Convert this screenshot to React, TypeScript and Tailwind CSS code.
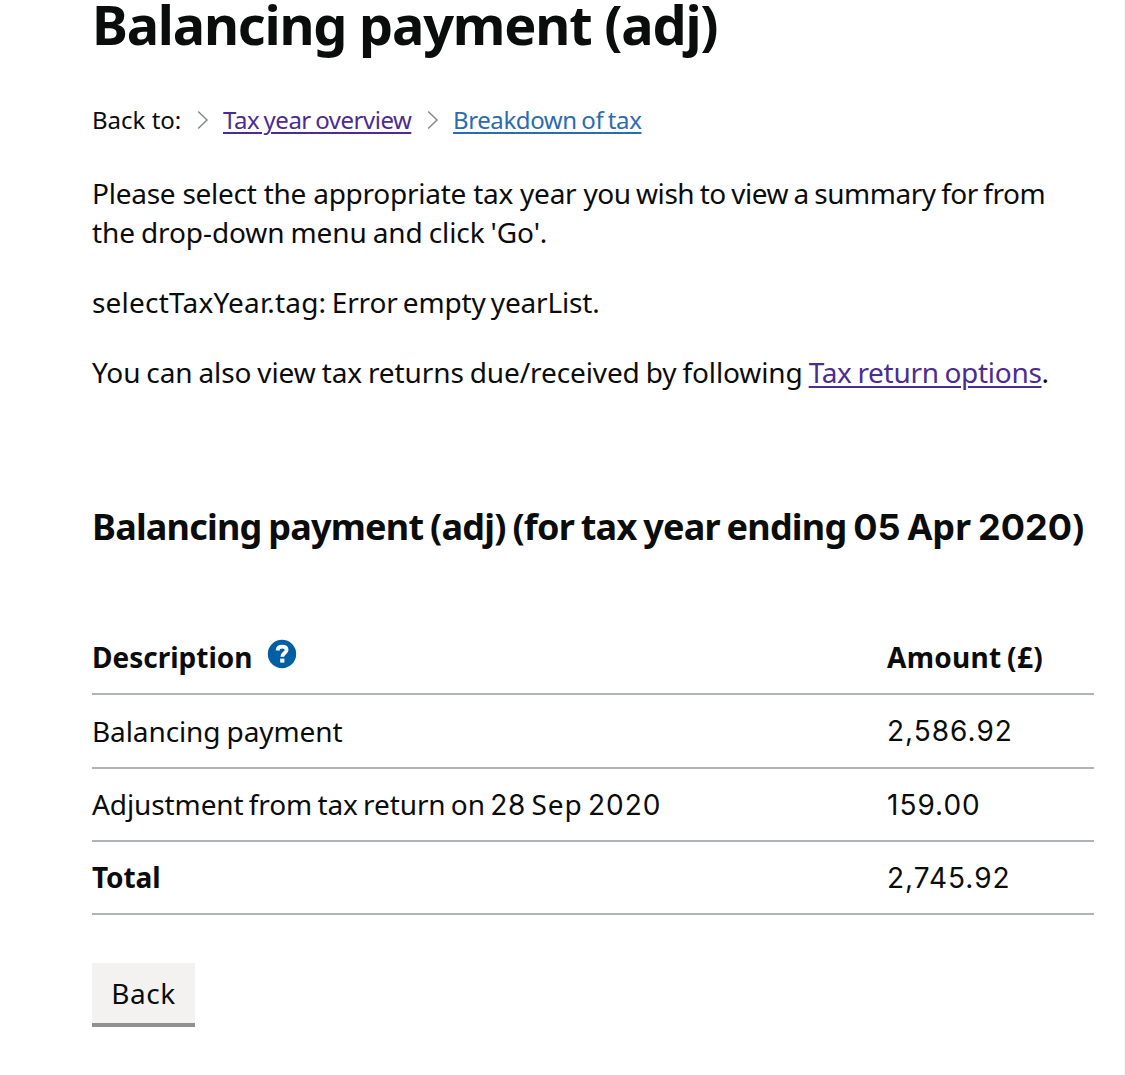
import type { ReactNode } from 'react';

const ROWS: { key: string; label: ReactNode; amount: string; rowClass: string; labelClass: string }[] = [
  { key: 'payment', label: 'Balancing payment', amount: '2,586.92', rowClass: 'h-[74px]', labelClass: '[word-spacing:-1px]' },
  {
    key: 'adjustment',
    label: (
      <>
        Adjustment from tax return on <Num className="tracking-[0.8px]">28</Num>{' '}
        <span className="tracking-[1px]">Sep</span> <Num className="tracking-[0.9px]">2020</Num>
      </>
    ),
    amount: '159.00',
    rowClass: 'h-[73px]',
    labelClass: '[word-spacing:-1.9px]',
  },
  { key: 'total', label: 'Total', amount: '2,745.92', rowClass: 'h-[73px]', labelClass: 'font-bold' },
];

function Num({ className, children }: { className: string; children: ReactNode }) {
  return <span className={`font-['Inter'] ${className}`}>{children}</span>;
}

function Chevron() {
  return (
    <svg className="w-[12px] h-[20px] shrink-0" viewBox="0 0 12 20" fill="none" stroke="#858a8d" strokeWidth="1.5">
      <path d="M1.2 1.5 10 10l-8.8 8.5" />
    </svg>
  );
}

function TextLink({ className, children }: { className: string; children: ReactNode }) {
  return (
    <a href="#" className={`underline decoration-2 underline-offset-[3px] ${className}`}>{children}</a>
  );
}

function HelpIcon() {
  return (
    <svg className="w-[30px] h-[30px]" viewBox="0 0 30 30">
      <circle cx="15" cy="15" r="14.2" fill="#005ea5" />
      <path d="M10.5 11.4c.3-2.5 2.1-3.8 4.7-3.8 2.7 0 4.4 1.3 4.4 3.4 0 3.2-4.3 3-4.3 6.8" fill="none" stroke="#fff" strokeWidth="3.8" />
      <rect x="13.2" y="19.6" width="4.2" height="4" fill="#fff" />
    </svg>
  );
}

export default function App() {
  return (
    <main className="w-[1125px] h-[1075px] overflow-hidden bg-white border-r border-[#f6f6f6] pl-[92px] pr-[30px] font-['Noto_Sans'] text-[28px] leading-[39px] text-[#0b0c0c] whitespace-nowrap">
      <h1 className="h-[100px] text-[54px] leading-[48px] font-bold tracking-[-1.2px]">Balancing payment (adj)</h1>

      <nav className="h-[40px] flex items-center text-[24px] leading-[40px]">
        <span className="w-[105px]">Back to:</span>
        <Chevron />
        <span className="w-[218px] pl-[14px] tracking-[-0.5px] [word-spacing:-1.2px]">
          <TextLink className="text-[#4c2c92]">Tax year overview</TextLink>
        </span>
        <Chevron />
        <span className="pl-[14px] tracking-[-0.4px] [word-spacing:-1.3px]">
          <TextLink className="text-[#2b6cb0]">Breakdown of tax</TextLink>
        </span>
      </nav>

      <p className="mt-[34px]">
        <span className="tracking-[-0.25px]">Please select the appropriate tax year </span>
        <span className="tracking-[-0.45px] [word-spacing:-1.4px]">you wish to view a summary for from</span>
        <br />
        <span className="tracking-[-0.1px] [word-spacing:-1.1px]">the drop-down menu and click 'Go'.</span>
      </p>
      <p className="mt-[31px] [word-spacing:-2px]">
        <span className="tracking-[0.2px]">selectTaxYear.tag: </span>
        <span className="tracking-[-0.15px]">Error empty yearList.</span>
      </p>
      <p className="mt-[31px] tracking-[-0.1px] [word-spacing:-1.2px]">
        <span>You can also view tax returns due/received by following </span>
        <TextLink className="text-[#4c2c92] tracking-[-0.3px]">Tax return options</TextLink>.
      </p>

      <h2 className="mt-[110px] h-[50px] text-[36px] leading-[50px] font-bold tracking-[-0.8px] [word-spacing:-1.7px]">
        Balancing payment (adj) (for tax year ending <Num className="tracking-normal">05</Num>{' '}
        <span className="tracking-normal">Apr</span> <Num className="tracking-normal">2020</Num>)
      </h2>

      <table className="mt-[69px] w-full border-collapse text-left">
        <thead>
          <tr className="h-[73px] border-b-2 border-[#b1b4b6]">
            <th className="w-[795px] p-0 font-bold">
              <div className="flex items-center">
                <span className="w-[175px]">Description</span>
                <span className="-mt-[6px]"><HelpIcon /></span>
              </div>
            </th>
            <th className="p-0 font-bold tracking-[0.3px] [word-spacing:-2px]">Amount (£)</th>
          </tr>
        </thead>
        <tbody>
          {ROWS.map((row) => (
            <tr key={row.key} className={`${row.rowClass} border-b-2 border-[#b1b4b6]`}>
              <td className={`p-0 tracking-[-0.1px] ${row.labelClass}`}>{row.label}</td>
              <td className="p-0"><Num className="tracking-[1px]">{row.amount}</Num></td>
            </tr>
          ))}
        </tbody>
      </table>

      <button type="button" className="mt-[48px] block w-[103px] h-[64px] bg-[#f3f2f1] border-b-4 border-[#929191] tracking-[0.5px]">Back</button>
    </main>
  );
}
